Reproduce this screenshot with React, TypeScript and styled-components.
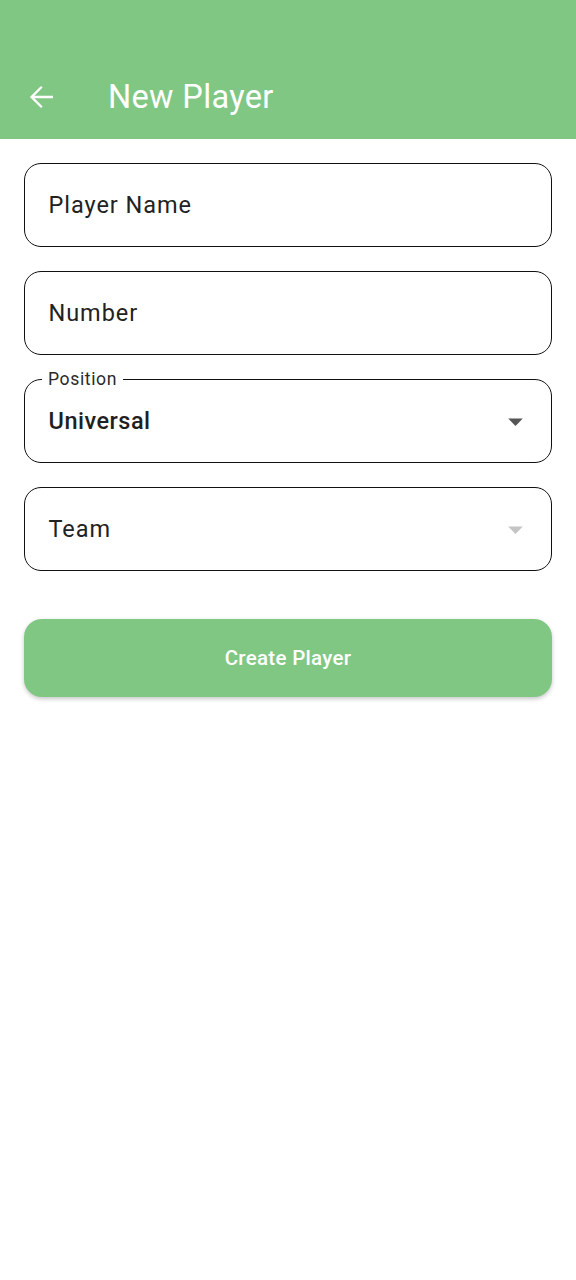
import styled, { createGlobalStyle } from "styled-components";

const GlobalStyle = createGlobalStyle`
    body {
        margin: 0;
        background: #ffffff;
        font-family: Roboto, "Noto Sans", sans-serif;
    }
`;

const fields = [
    { key: "name", placeholder: "Player Name" },
    { key: "number", placeholder: "Number" },
];

const App = () => {
    return (
        <>
            <GlobalStyle />
            <Page>
                <AppBar>
                    <BackButton aria-label="Back">
                        <svg width="36" height="36" viewBox="0 0 24 24" fill="#ffffff">
                            <path d="M20 11.2H7.6l5.5-5.5L12 4.6 4.6 12l7.4 7.4 1.1-1.1-5.5-5.5H20v-1.6z" />
                        </svg>
                    </BackButton>
                    <Title>New Player</Title>
                </AppBar>
                <Form>
                    {fields.map((f) => (
                        <Field key={f.key}>
                            <Placeholder>{f.placeholder}</Placeholder>
                        </Field>
                    ))}
                    <Field>
                        <FloatingLabel>Position</FloatingLabel>
                        <Value>Universal</Value>
                        <Caret $disabled={false} />
                    </Field>
                    <Field>
                        <Placeholder>Team</Placeholder>
                        <Caret $disabled />
                    </Field>
                    <SubmitButton>Create Player</SubmitButton>
                </Form>
            </Page>
        </>
    );
};

const Caret = ({ $disabled }: { $disabled: boolean }) => (
    <CaretIcon width="35" height="35" viewBox="0 0 24 24" $disabled={$disabled}>
        <path d="M7 10l5 5 5-5z" />
    </CaretIcon>
);

export default App;

const Page = styled.div`
    width: 576px;
    min-height: 1280px;
    background: #ffffff;
`

const AppBar = styled.header`
    height: 139px;
    background-color: #81c784;
    display: flex;
    align-items: flex-end;
    box-sizing: border-box;
    padding-bottom: 24px;
`

const BackButton = styled.button`
    border: none;
    background: none;
    padding: 0;
    margin-left: 23px;
    width: 36px;
    height: 36px;
    display: flex;
    cursor: pointer;
`

const Title = styled.h1`
    margin: 0 0 0 49px;
    color: #ffffff;
    font-size: 32.5px;
    font-weight: 400;
    letter-spacing: 0.35px;
    line-height: 36px;
`

const Form = styled.div`
    display: flex;
    flex-direction: column;
    gap: 24px;
    padding: 24px;
`

const Field = styled.div`
    position: relative;
    height: 84px;
    box-sizing: border-box;
    border: 1.5px solid #111111;
    border-radius: 17px;
    display: flex;
    align-items: center;
    justify-content: space-between;
    padding: 0 18px 0 23.5px;
`

const Placeholder = styled.span`
    font-size: 23.5px;
    letter-spacing: 0.95px;
    color: #222222;
`

const Value = styled.span`
    font-size: 23.5px;
    font-weight: 500;
    letter-spacing: 0.5px;
    color: #1f1f1f;
`

const FloatingLabel = styled.span`
    position: absolute;
    top: -11px;
    left: 17px;
    padding: 0 6px;
    background: #ffffff;
    font-size: 17.6px;
    line-height: 20px;
    letter-spacing: 0.6px;
    color: #2a2a2a;
`

const CaretIcon = styled.svg<{ $disabled: boolean }>`
    flex-shrink: 0;
    fill: ${(p) => (p.$disabled ? "#c4c4c4" : "#555555")};
`

const SubmitButton = styled.button`
    margin-top: 24px;
    height: 78px;
    border: none;
    border-radius: 18px;
    background-color: #81c784;
    color: #ffffff;
    font-family: Roboto, "Noto Sans", sans-serif;
    font-size: 20.5px;
    font-weight: 500;
    letter-spacing: 0.3px;
    box-shadow: 0 2px 4px rgba(0, 0, 0, 0.22);
    cursor: pointer;
`
